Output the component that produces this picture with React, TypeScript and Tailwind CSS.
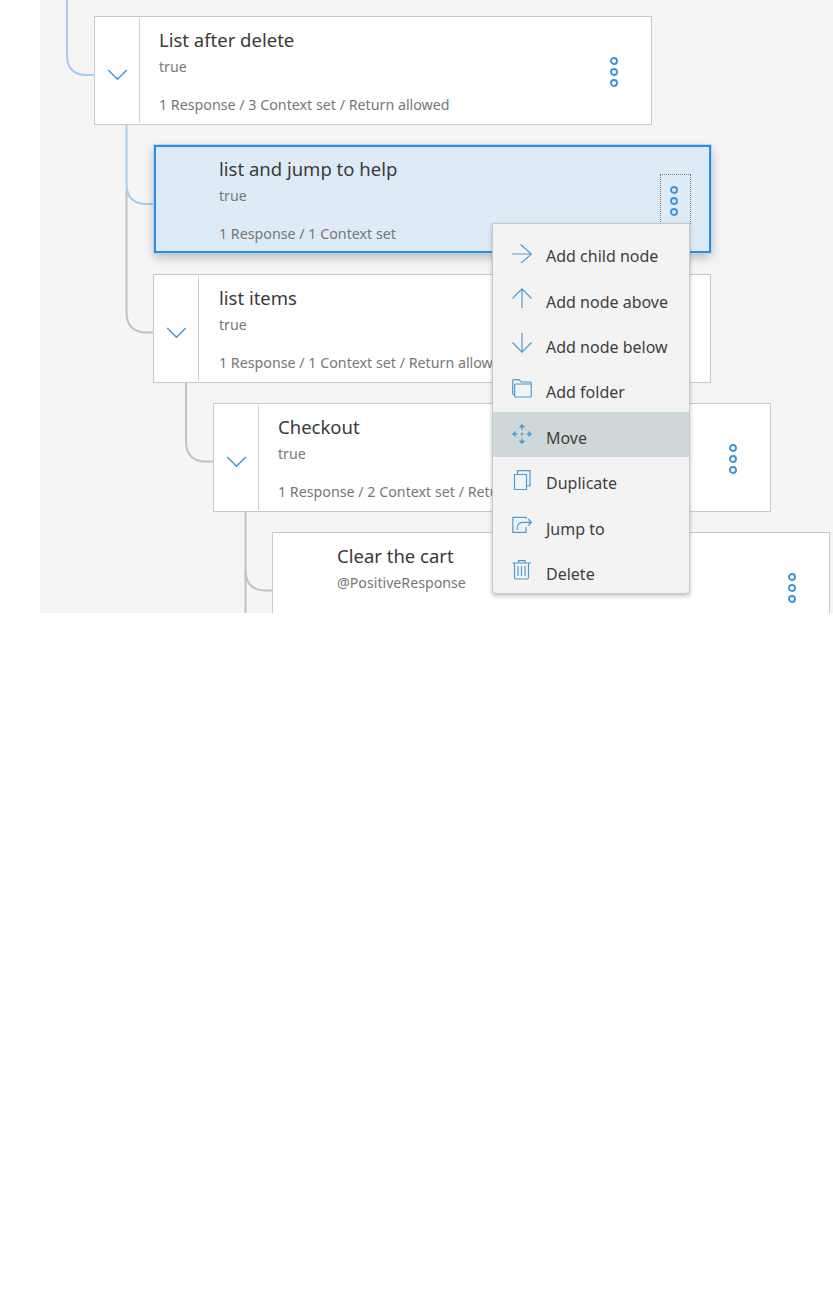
const blue = '#3f93d3';

type NodeProps = {
  title: string;
  condition: string;
  meta?: string;
  left: string;
  textPad?: string;
  chevron?: boolean;
  selected?: boolean;
};

function Dots({ className }: { className: string }) {
  return (
    <svg className={className} width="10" height="32" viewBox="0 0 10 32" fill="none" stroke={blue} strokeWidth="1.9">
      <circle cx="5" cy="5" r="3" />
      <circle cx="5" cy="16" r="3" />
      <circle cx="5" cy="27" r="3" />
    </svg>
  );
}

function TreeNode({ title, condition, meta, left, textPad = 'pl-[19px]', chevron, selected }: NodeProps) {
  return (
    <div
      className={`relative flex shrink-0 ${left} ${
        selected
          ? 'mb-px h-[108px] w-[557px] border-2 border-[#2b8ddb] bg-[#deebf7] shadow-[0_0_0_1px_#b9d6f0,0_4px_10px_rgba(0,0,0,0.25)]'
          : 'h-[109px] w-[558px] border border-[#c9c9c9] bg-white'
      }`}
    >
      <div className={`flex shrink-0 items-center justify-center py-px ${selected ? 'w-[44px]' : 'w-[45px]'}`}>
        {chevron && (
          <div className="flex h-full w-full items-center justify-center border-r border-[#d0d0d0] pl-px pt-[9px]">
            <svg width="21" height="12" viewBox="0 0 21 12" fill="none" stroke={blue} strokeWidth="1.3">
              <path d="M1.2 1 L10.5 10.3 L19.8 1" />
            </svg>
          </div>
        )}
      </div>
      <div className={`flex flex-col ${textPad}`}>
        <div className={`text-[18.5px] leading-[26px] text-[#3a3a3a] ${selected ? 'mt-[9px]' : 'mt-[10px]'}`}>{title}</div>
        <div className="mt-[4px] text-[14.2px] leading-[20px] text-[#777]">{condition}</div>
        {meta && <div className="mt-[18px] whitespace-nowrap text-[14.25px] leading-[20px] text-[#777]">{meta}</div>}
      </div>
      <Dots className={selected ? 'absolute right-[30px] top-[38px]' : 'absolute right-[32px] top-[39px]'} />
    </div>
  );
}

function Connectors() {
  return (
    <svg className="absolute left-0 top-0" width="793" height="613" viewBox="40 0 793 613" fill="none" strokeWidth="2">
      <path d="M126.5 190 V312 Q126.5 332.5 147 332.5 H154" stroke="#c2c2c2" />
      <path d="M186 383 V441 Q186 461.5 206 461.5 H213" stroke="#c2c2c2" />
      <path d="M245.5 512 V613 M245.5 570 Q245.5 590.5 266 590.5 H273" stroke="#c2c2c2" />
      <path d="M67 0 V55 Q67 75 87 75 H94" stroke="#a5cdf3" />
      <path d="M126.5 125 V184 Q126.5 204 147 204 H154" stroke="#a5cdf3" />
    </svg>
  );
}

const icons: Record<string, React.ReactNode> = {
  child: <path d="M0 11H19 M8.5 1.5 L19.5 11 L8.5 20.5" />,
  above: <path d="M10 20V1 M0.5 10.5 L10 0.8 L19.5 10.5" />,
  below: <path d="M10 0V19 M0.5 9.5 L10 19.2 L19.5 9.5" />,
  folder: <path d="M0.7 14.5 V1.7 Q0.7 0.7 1.7 0.7 H7 L9 3 H18 Q19.3 3 19.3 4.3 V17 Q19.3 18 18.3 18 H3.5 Q2.6 18 2.6 17 V6 Q2.6 5 3.6 5 H19.3 M0.7 14.5 Q0.7 16 2.6 16" />,
  move: (
    <>
      <path d="M10 3V6 M10 8.5V11.5 M10 14V17 M3 10H6 M8.5 10H11.5 M14 10H17" />
      <path fill="#4b9bd6" d="M8 3 L10 0.8 L12 3Z M8 17 L10 19.2 L12 17Z M3 8 L0.8 10 L3 12Z M17 8 L19.2 10 L17 12Z" />
    </>
  ),
  duplicate: <path d="M2.5 4.5 H14.5 V19.5 H2.5Z M5.5 4.5 V0.7 H18 V16 H14.5" />,
  jump: <path d="M0.8 2.3 H14 V4 M0.8 2.3 V17.3 H14 V12 M5 15 Q5 7.3 11 7.3 H19.3 M16 4 L19.5 7.3 L16 10.6" />,
  trash: <path d="M0.5 3H19 M6.5 3V0.7H13V3 M2.5 3V17.5Q2.5 19 4 19H15Q16.5 19 16.5 17.5V3 M6 6V16 M9.5 6V16 M13 6V16" />,
};

const menuItems = [
  { label: 'Add child node', icon: 'child' },
  { label: 'Add node above', icon: 'above' },
  { label: 'Add node below', icon: 'below' },
  { label: 'Add folder', icon: 'folder' },
  { label: 'Move', icon: 'move', active: true },
  { label: 'Duplicate', icon: 'duplicate' },
  { label: 'Jump to', icon: 'jump' },
  { label: 'Delete', icon: 'trash' },
];

function ContextMenu() {
  return (
    <div className="absolute left-[452px] top-[223px] w-[198px] rounded-b-[4px] border border-[#c8c8c8] bg-[#f3f3f3] pt-[6px] shadow-[0_2px_4px_rgba(0,0,0,0.25)]">
      {menuItems.map((item) => (
        <div
          key={item.label}
          className={`flex h-[45.4px] items-center pl-[19px] ${item.active ? 'bg-[#cfd8d8]' : ''}`}
        >
          <svg className="shrink-0" width="20" height="20" viewBox="0 0 20 20" fill="none" stroke="#4b9bd6" strokeWidth="1.2">
            {icons[item.icon]}
          </svg>
          <span className="ml-[14px] pt-[7px] text-[16px] text-[#3f3f3f]">{item.label}</span>
        </div>
      ))}
    </div>
  );
}

export default function App() {
  return (
    <div className="h-[1314px] w-[833px] overflow-hidden bg-white font-['Noto_Sans',sans-serif]">
      <div className="relative ml-[40px] flex h-[613px] w-[793px] flex-col gap-[20px] overflow-hidden bg-[#f5f5f5] pt-[16px]">
        <Connectors />
        <TreeNode left="ml-[54px]" title="List after delete" condition="true" meta="1 Response / 3 Context set / Return allowed" chevron />
        <TreeNode left="ml-[114px]" title="list and jump to help" condition="true" meta="1 Response / 1 Context set" selected />
        <TreeNode left="ml-[113px]" textPad="pl-[20px]" title="list items" condition="true" meta="1 Response / 1 Context set / Return allowed" chevron />
        <TreeNode left="ml-[173px]" title="Checkout" condition="true" meta="1 Response / 2 Context set / Return allowed" chevron />
        <TreeNode left="ml-[232px]" title="Clear the cart" condition="@PositiveResponse" />
        <div className="absolute left-[620px] top-[174px] h-[50px] w-[31px] border border-dotted border-[#777]" />
        <ContextMenu />
      </div>
    </div>
  );
}
